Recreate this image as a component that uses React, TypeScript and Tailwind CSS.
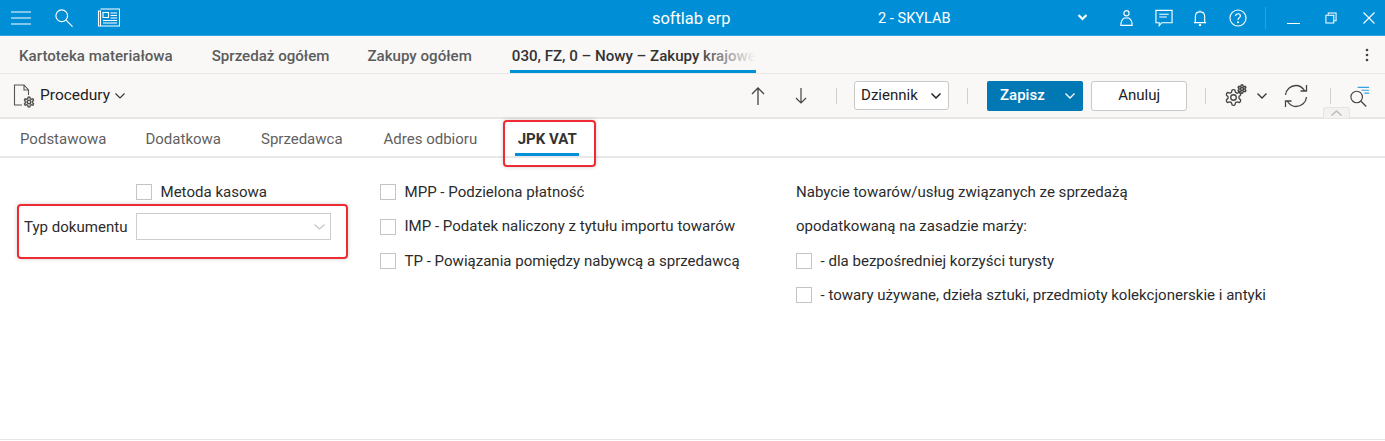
import React from "react";

const GEAR =
  "M12.22 2h-.44a2 2 0 0 0-2 2v.18a2 2 0 0 1-1 1.73l-.43.25a2 2 0 0 1-2 0l-.15-.08a2 2 0 0 0-2.73.73l-.22.38a2 2 0 0 0 .73 2.73l.15.1a2 2 0 0 1 1 1.72v.51a2 2 0 0 1-1 1.74l-.15.09a2 2 0 0 0-.73 2.73l.22.38a2 2 0 0 0 2.73.73l.15-.08a2 2 0 0 1 2 0l.43.25a2 2 0 0 1 1 1.73V20a2 2 0 0 0 2 2h.44a2 2 0 0 0 2-2v-.18a2 2 0 0 1 1-1.73l.43-.25a2 2 0 0 1 2 0l.15.08a2 2 0 0 0 2.73-.73l.22-.39a2 2 0 0 0-.73-2.73l-.15-.08a2 2 0 0 1-1-1.74v-.5a2 2 0 0 1 1-1.74l.15-.09a2 2 0 0 0 .73-2.73l-.22-.38a2 2 0 0 0-2.73-.73l-.15.08a2 2 0 0 1-2 0l-.43-.25a2 2 0 0 1-1-1.73V4a2 2 0 0 0-2-2z";

const Gear = ({ x, y, s, w }: { x: number; y: number; s: number; w: number }) => (
  <svg x={x} y={y} width={s} height={s} viewBox="0 0 24 24">
    <path d={GEAR} strokeWidth={w} />
    <circle cx="12" cy="12" r="3.500" strokeWidth={w} />
  </svg>
);

const Check = () => <span className="block w-[16px] h-[16px] shrink-0 border border-[#c4c4c4] bg-white" />;

const Row = ({ label }: { label: string }) => (
  <div className="flex items-center gap-[8.500px] h-[34.400px]">
    <Check />
    <span>{label}</span>
  </div>
);

const Sep = ({ cls }: { cls: string }) => <span className={`block w-px h-[16px] bg-[#cfcfcf] ${cls}`} />;

export default function App() {
  return (
    <div className="w-[1385px] h-[441px] overflow-hidden bg-white relative text-[15px] text-[#333] font-['Roboto',sans-serif]">
      {/* title bar */}
      <div className="h-[36px] bg-[#008fd6] border-b border-[#33a5de] flex items-center text-white relative">
        <svg width="20" height="14" viewBox="0 0 20 14" className="ml-[11px]" stroke="#fff" fill="none" strokeWidth="1.2">
          <path d="M0 1h20M0 7h20M0 13h20" />
        </svg>
        <svg width="18" height="18" viewBox="0 0 20 20" className="ml-[24px]" stroke="#fff" fill="none" strokeWidth="1.3">
          <circle cx="7.500" cy="7.500" r="6.500" />
          <path d="M12 12l7.500 7.500" />
        </svg>
        <svg width="23" height="19" viewBox="0 0 23 19" className="ml-[24px]" stroke="#fff" fill="none" strokeWidth="1.1">
          <path d="M3.500 1H22.500V18H1.500V3H3.500V18" />
          <path d="M6 4.500h5.500v5H6z" />
          <path d="M13.500 5h6.500M13.500 7.500h6.500M13.500 10h6.500M6 12.500h14M6 15h14" />
        </svg>
        <span className="absolute left-[652px] top-[9px] text-[16.400px] leading-[20px]">softlab erp</span>
        <span className="absolute left-[878px] top-[8px] text-[14.600px] leading-[20px]">2 - SKYLAB</span>
        <div className="ml-auto flex items-center pr-[10px]">
          <svg width="11" height="7" viewBox="0 0 10 7" stroke="#fff" fill="none" strokeWidth="2.200" className="mr-[32px]">
            <path d="M1 1l4 4 4-4" />
          </svg>
          <svg width="13" height="18" viewBox="0 0 15 19" stroke="#fff" fill="none" strokeWidth="1.3" className="mr-[22px]">
            <circle cx="7.500" cy="4" r="3" />
            <path d="M1 18c0-4 1-7 4-8.500h5c3 1.500 4 4.500 4 8.500z" />
          </svg>
          <svg width="18" height="18" viewBox="0 0 19 18" stroke="#fff" fill="none" strokeWidth="1.2" className="mr-[20px]">
            <path d="M1 1h17v13H7l-2.500 3v-3H1z" />
            <path d="M4.500 5h10M4.500 8h8" />
          </svg>
          <svg width="14" height="18" viewBox="0 0 15 18" stroke="#fff" fill="none" strokeWidth="1.2" className="mr-[22px]">
            <path d="M7.500 1v1.500M2.500 14V7.500C2.500 4.500 4.500 2.500 7.500 2.500S12.500 4.500 12.500 7.500V14M1 14h13" />
            <circle cx="7.500" cy="16.500" r="0.700" fill="#fff" />
          </svg>
          <svg width="18" height="18" viewBox="0 0 19 19" stroke="#fff" fill="none" strokeWidth="1.2" className="mr-[18px]">
            <circle cx="9.500" cy="9.500" r="8.500" />
            <path d="M7 7.500c0-1.500 1-2.500 2.500-2.500s2.500 1 2.500 2.300c0 2-2.500 2-2.500 4.200" />
            <circle cx="9.500" cy="14" r="0.500" fill="#fff" />
          </svg>
          <span className="block w-px h-[22px] bg-[#2ba0dc] mr-[21px]" />
          <span className="block w-[13px] h-px bg-white mr-[25px] mt-[11px]" />
          <svg width="12" height="12" viewBox="0 0 13 13" stroke="#fff" fill="none" strokeWidth="1.100" className="mr-[26px]">
            <path d="M3.500 3V1H12V9.500H9.500" />
            <path d="M1 3.500h8.500V12H1z" />
          </svg>
          <svg width="12" height="12" viewBox="0 0 12 12" stroke="#fff" fill="none" strokeWidth="1.100">
            <path d="M0.500 0.500l11 11M11.500 0.500l-11 11" />
          </svg>
        </div>
      </div>

      {/* document tabs */}
      <div className="h-[38px] bg-[#f9f8f7] border-b border-[#e8e7e6] flex items-stretch font-medium text-[15.100px] text-[#5c5c5c] relative">
        <span className="ml-[19px] pt-[11px] leading-[18px]">Kartoteka materiałowa</span>
        <span className="ml-[39px] pt-[11px] leading-[18px]">Sprzedaż ogółem</span>
        <span className="ml-[38px] pt-[11px] leading-[18px]">Zakupy ogółem</span>
        <div className="ml-[38px] w-[246px] h-[37px] relative pt-[11px] pl-[2px] leading-[18px] text-[#333] border-b-[3px] border-[#0090d7] overflow-hidden whitespace-nowrap">
          030, FZ, 0 – Nowy – Zakupy krajowe
          <span className="absolute right-0 top-0 bottom-0 w-[60px] bg-gradient-to-r from-transparent to-[#f9f8f7]" />
        </div>
        <svg width="4" height="16" viewBox="0 0 4 16" fill="#444" className="ml-auto mr-[16px] mt-[11px]">
          <circle cx="2" cy="3" r="1.300" />
          <circle cx="2" cy="8" r="1.300" />
          <circle cx="2" cy="13" r="1.300" />
        </svg>
      </div>

      {/* toolbar */}
      <div className="h-[45px] bg-[#f9f8f7] border-b-2 border-[#e6e6e6] flex items-center relative text-[#222]">
        <svg width="23" height="24" viewBox="0 0 23 24" stroke="#555" fill="none" strokeWidth="1.100" className="ml-[13px]">
          <path d="M9 21H1.500V1H11l4.500 5v5M11 1v5h4.500" />
          <Gear x={10} y={12} s={12} w={3} />
        </svg>
        <span className="ml-[4px] text-[15.500px]">Procedury</span>
        <svg width="10" height="6" viewBox="0 0 10 6" stroke="#333" fill="none" strokeWidth="1.100" className="ml-[5px]">
          <path d="M0.500 0.500L5 5l4.500-4.500" />
        </svg>
        <svg width="14" height="18" viewBox="0 0 14 18" stroke="#444" fill="none" strokeWidth="1.300" className="ml-[626px]">
          <path d="M7 18V1M1 7l6-6 6 6" />
        </svg>
        <svg width="12" height="16" viewBox="0 0 12 16" stroke="#444" fill="none" strokeWidth="1.200" className="ml-[30px]">
          <path d="M6 0v15M1 10l5 5 5-5" />
        </svg>
        <Sep cls="ml-[29px]" />
        <div className="ml-[17px] w-[95px] h-[29px] border border-[#c8c8c8] rounded-[3px] bg-white flex items-center pl-[6px] pr-[7px] justify-between">
          <span>Dziennik</span>
          <svg width="10" height="6" viewBox="0 0 10 6" stroke="#222" fill="none" strokeWidth="1.500">
            <path d="M0.500 0.500L5 5l4.500-4.500" />
          </svg>
        </div>
        <Sep cls="ml-[18px]" />
        <div className="ml-[19px] w-[96px] h-[30px] rounded-[2px] bg-[#0078b4] text-white flex items-center pl-[13px] pr-[8px] justify-between font-medium">
          <span>Zapisz</span>
          <svg width="10" height="6" viewBox="0 0 10 6" stroke="#fff" fill="none" strokeWidth="1.300">
            <path d="M0.500 0.500L5 5l4.500-4.500" />
          </svg>
        </div>
        <div className="ml-[8px] w-[96px] h-[30px] rounded-[3px] border border-[#c8c8c8] bg-white flex items-center justify-center">
          Anuluj
        </div>
        <Sep cls="ml-[18px]" />
        <svg width="23" height="24" viewBox="0 0 23 24" stroke="#444" fill="none" className="ml-[18px]">
          <Gear x={0} y={4} s={19} w={1.700} />
          <Gear x={13} y={0} s={10} w={3.500} />
        </svg>
        <svg width="10" height="6" viewBox="0 0 10 6" stroke="#333" fill="none" strokeWidth="1.300" className="ml-[10px]">
          <path d="M0.500 0.500L5 5l4.500-4.500" />
        </svg>
        <svg width="24" height="24" viewBox="0 0 24 24" stroke="#444" fill="none" strokeWidth="1.300" className="ml-[17px]">
          <path d="M1.500 11C2 5.500 6.500 1.500 12 1.500c3.500 0 6.500 2 8.500 5M22.500 1v6h-6" />
          <path d="M22.500 13c-.5 5.500-5 9.500-10.500 9.500-3.500 0-6.500-2-8.500-5M1.500 23v-6h6" />
        </svg>
        <Sep cls="ml-[22px]" />
        <svg width="23" height="24" viewBox="0 0 24 24" fill="none" className="ml-[18px]">
          <circle cx="8" cy="13" r="6" stroke="#444" strokeWidth="1.200" />
          <path d="M12.500 17.500L18 23" stroke="#444" strokeWidth="1.300" />
          <path d="M9 3h12M13 6h8M16 9h5" stroke="#35a3e0" strokeWidth="1.300" />
        </svg>
        <div className="absolute left-[1323px] top-[33px] w-[27px] h-[11px] bg-[#f3f2f1] border border-b-0 border-[#e4e4e4] rounded-t-[3px] flex justify-center pt-[2px]">
          <svg width="11" height="6" viewBox="0 0 11 6" stroke="#bdbdbd" fill="none" strokeWidth="1.500">
            <path d="M0.500 5.500l5-4.500 5 4.500" />
          </svg>
        </div>
      </div>

      {/* sections tabs */}
      <div className="h-[39px] border-b-2 border-[#e8e8e8] flex items-stretch text-[#5f5f5f] relative">
        <span className="ml-[20px] pt-[11px] leading-[18px]">Podstawowa</span>
        <span className="ml-[39px] pt-[11px] leading-[18px]">Dodatkowa</span>
        <span className="ml-[40px] pt-[11px] leading-[18px]">Sprzedawca</span>
        <span className="ml-[41px] pt-[11px] leading-[18px]">Adres odbioru</span>
        <div className="ml-[38px] w-[64px] h-[37px] pt-[11px] leading-[18px] text-center font-bold text-[#333] border-b-[3px] border-[#0090d7]">
          JPK VAT
        </div>
      </div>

      {/* form */}
      <div className="flex items-start pt-[17px] text-[#2b2b2b] text-[15.050px] relative">
        <div className="w-[380px] shrink-0">
          <div className="pl-[136px]">
            <Row label="Metoda kasowa" />
          </div>
          <div className="flex items-center pl-[24px] h-[35px]">
            <span className="w-[112px]">Typ dokumentu</span>
            <div className="w-[195px] h-[27px] border border-[#cdcdcd] bg-white flex items-center justify-end pr-[5px]">
              <svg width="11" height="6" viewBox="0 0 11 6" stroke="#c4c4c4" fill="none" strokeWidth="1.100">
                <path d="M0.500 0.500l5 4.500 5-4.500" />
              </svg>
            </div>
          </div>
        </div>
        <div className="w-[416px] shrink-0">
          <Row label="MPP - Podzielona płatność" />
          <Row label="IMP - Podatek naliczony z tytułu importu towarów" />
          <Row label="TP - Powiązania pomiędzy nabywcą a sprzedawcą" />
        </div>
        <div>
          <div className="h-[34.400px] flex items-center">Nabycie towarów/usług związanych ze sprzedażą</div>
          <div className="h-[34.400px] flex items-center">opodatkowaną na zasadzie marży:</div>
          <Row label="- dla bezpośredniej korzyści turysty" />
          <Row label="- towary używane, dzieła sztuki, przedmioty kolekcjonerskie i antyki" />
        </div>
      </div>

      {/* annotations */}
      <div className="absolute left-[503px] top-[120px] w-[93px] h-[47px] border-2 border-[#ee2a33] rounded-[4px] shadow-[0_0_4px_rgba(0,0,0,0.2)]" />
      <div className="absolute left-[17px] top-[204px] w-[331px] h-[55px] border-2 border-[#ee2a33] rounded-[4px] shadow-[0_0_4px_rgba(0,0,0,0.2)]" />

      {/* bottom rule */}
      <div className="absolute left-0 right-0 top-[439px] h-px bg-[#e6e6e6]" />
    </div>
  );
}
